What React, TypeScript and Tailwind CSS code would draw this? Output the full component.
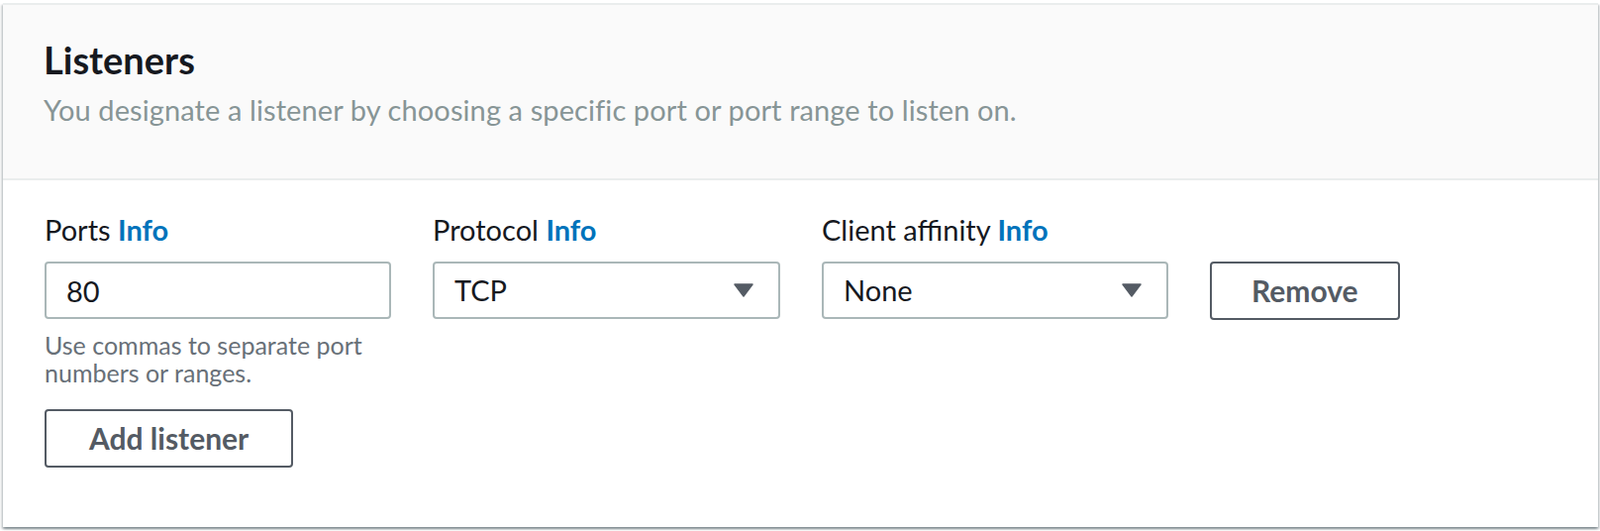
import { useState } from "react";

function Label({ text }: { text: string }) {
  return (
    <div className="text-[29px] leading-[40px] text-[#16191f]">
      {text} <span className="font-bold text-[#0073bb]">Info</span>
    </div>
  );
}

function Select({ value }: { value: string }) {
  return (
    <div className="mt-[12px] flex h-[58px] items-center justify-between rounded-[4px] border-2 border-[#aab7b8] bg-white pl-[20px] pr-[25px] text-[29px] text-[#16191f]">
      <span>{value}</span>
      <svg width="20" height="14" viewBox="0 0 20 14">
        <path d="M1 1 L19 1 L10 13 Z" fill="#545b64" stroke="#545b64" strokeWidth="1.5" strokeLinejoin="round" />
      </svg>
    </div>
  );
}

export default function App() {
  const [ports, setPorts] = useState("80");

  return (
    <div className="min-h-screen bg-white pt-[3px] pl-[3px]" style={{ fontFamily: "Lato, 'Noto Sans', sans-serif" }}>
      <div className="w-[1611px] border-t-2 border-[#eaeded] bg-white shadow-[0_2px_2px_0_rgba(0,28,36,0.3),2px_2px_2px_0_rgba(0,28,36,0.15),-2px_2px_2px_0_rgba(0,28,36,0.15)]">
        <div className="border-b-2 border-[#eaeded] bg-[#fafafa] pl-[41px] pt-[33px] pb-[49px]">
          <h2 className="text-[38px] font-bold leading-[44px] text-[#16191f]">Listeners</h2>
          <p className="mt-[9px] text-[29px] leading-[40px] tracking-[0.1px] text-[#879596]">
            You designate a listener by choosing a specific port or port range to listen on.
          </p>
        </div>

        <div className="pl-[42px] pt-[30px] pb-[60px]">
          <div className="flex items-start gap-[42px]">
            <div className="w-[350px]">
              <Label text="Ports" />
              <input
                value={ports}
                onChange={(e) => setPorts(e.target.value)}
                className="mt-[12px] h-[58px] w-full rounded-[4px] border-2 border-[#aab7b8] px-[20px] text-[29px] text-[#16191f] outline-none"
              />
              <p className="mt-[12px] text-[25px] leading-[28px] text-[#687078]">
                Use commas to separate port numbers or ranges.
              </p>
            </div>
            <div className="w-[351px]">
              <Label text="Protocol" />
              <Select value="TCP" />
            </div>
            <div className="w-[350px]">
              <Label text="Client affinity" />
              <Select value="None" />
            </div>
            <button className="mt-[52px] h-[59px] rounded-[4px] border-2 border-[#545b64] px-[40px] text-[30px] font-bold text-[#545b64]">
              Remove
            </button>
          </div>
          <button className="mt-[23px] h-[59px] rounded-[4px] border-2 border-[#545b64] px-[43px] text-[30px] font-bold text-[#545b64]">
            Add listener
          </button>
        </div>
      </div>
    </div>
  );
}
